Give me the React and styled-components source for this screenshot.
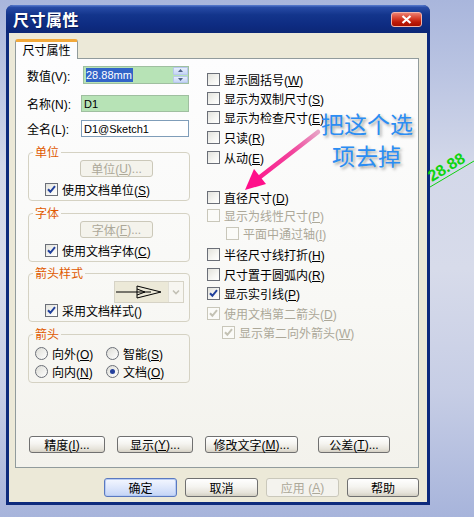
import React from 'react'
import styled, { createGlobalStyle } from 'styled-components'

const GlobalStyle = createGlobalStyle`
  html, body {
    margin: 0;
    padding: 0;
  }
  body {
    width: 474px;
    height: 517px;
    overflow: hidden;
    font-family: "Liberation Sans", "Noto Sans CJK SC", sans-serif;
    font-size: 12px;
    color: #000;
    background: linear-gradient(180deg, #a9b6dc 0%, #bac4e2 14%, #d3d8e9 32%, #d7dbea 52%, #c6cde5 76%, #a7b4db 100%);
  }
`

const Page = styled.div`
  position: relative;
  width: 474px;
  height: 517px;
  box-sizing: border-box;
  padding: 5px 0 0 6px;
`

const Window = styled.div`
  width: 424px;
  height: 500px;
  display: flex;
  flex-direction: column;
  background: #0d2a7c;
  border-radius: 7px 7px 0 0;
`

const TitleBar = styled.div`
  flex: none;
  height: 28px;
  display: flex;
  align-items: center;
  justify-content: space-between;
  padding: 0 8px 0 7px;
  border-radius: 7px 7px 0 0;
  background: linear-gradient(180deg, #5a7dcf 0%, #274aa5 9%, #13358c 35%, #0e2c82 70%, #0c2776 100%);
`

const Title = styled.div`
  color: #fff;
  font-family: "Noto Sans CJK SC", sans-serif;
  font-size: 16px;
  font-weight: 700;
  letter-spacing: 0.5px;
  text-shadow: 1px 1px 0 #0a1a55;
`

const CloseBtn = styled.div`
  width: 31px;
  height: 15px;
  box-sizing: border-box;
  border: 1px solid #f3b3a8;
  border-radius: 3px;
  display: flex;
  align-items: center;
  justify-content: center;
  background: linear-gradient(180deg, #ec7f70 0%, #d8402c 40%, #bd1a08 70%, #a80f00 100%);
`

const Body = styled.div`
  flex: 1;
  margin: 0 3px 3px;
  padding: 6px 8px 5px 6px;
  background: #ece9d8;
  display: flex;
  flex-direction: column;
`

const TabStrip = styled.div`
  display: flex;
  height: 19px;
`

const Tab = styled.div`
  position: relative;
  z-index: 1;
  width: 63px;
  height: 20px;
  box-sizing: border-box;
  border: 1px solid #919b9c;
  border-top: 3px solid #f2a93b;
  border-bottom: none;
  border-radius: 3px 3px 0 0;
  background: #fcfcfe;
  font-family: "Noto Sans CJK SC", sans-serif;
  line-height: 16px;
  text-align: center;
`

const Panel = styled.div`
  height: 410px;
  box-sizing: border-box;
  border: 1px solid #919b9c;
  background: linear-gradient(180deg, #fdfdfe 0%, #f8f8f5 60%, #f3f2ec 100%);
  display: flex;
  flex-direction: column;
`

const Columns = styled.div`
  display: flex;
  padding-left: 11px;
`

const LeftCol = styled.div`
  width: 163px;
  padding-top: 7px;
  display: flex;
  flex-direction: column;
`

const RightCol = styled.div`
  margin-left: 17px;
  padding-top: 11px;
  display: flex;
  flex-direction: column;
`

const FieldRow = styled.div`
  display: flex;
  align-items: center;
  height: ${p => p.$h}px;
  margin-top: ${p => p.$mt || 0}px;
`

const FieldLabel = styled.span`
  width: ${p => p.$w || 54}px;
  flex: none;
  white-space: nowrap;
`

const TextBox = styled.div`
  width: ${p => p.$w}px;
  height: 100%;
  box-sizing: border-box;
  border: 1px solid ${p => (p.$green ? '#9fbfa0' : '#7f9db9')};
  background: ${p => (p.$green ? '#b7e3b6' : '#fff')};
  display: flex;
  align-items: center;
  padding-left: 2px;
  font-size: 11px;
`

const Selected = styled.span`
  background: #3164c8;
  color: #fff;
  line-height: 14px;
  padding-right: 1px;
`

const SpinCol = styled.div`
  margin-left: auto;
  width: 15px;
  height: 16px;
  display: flex;
  flex-direction: column;
  gap: 1px;
`

const SpinBtn = styled.div`
  flex: 1;
  border: 1px solid #b7c8ee;
  border-radius: 1px;
  background: linear-gradient(180deg, #e6eefc, #c5d5f6);
  display: flex;
  align-items: center;
  justify-content: center;
`

const Group = styled.fieldset`
  margin: ${p => p.$mt}px 0 0 1px;
  padding: 1px 0 4px;
  width: 162px;
  box-sizing: border-box;
  min-width: 0;
  border: 1px solid #d5d2c3;
  border-radius: 4px;
  display: flex;
  flex-direction: column;
`

const Legend = styled.legend`
  margin-left: 4px;
  padding: 0 2px;
  color: #e05a00;
  line-height: 14px;
  font-family: "Noto Sans CJK SC", sans-serif;
`

const GroupButton = styled.div`
  margin-left: 51px;
  width: 73px;
  height: 17px;
  box-sizing: border-box;
  border: 1px solid #cbc8b9;
  border-radius: 3px;
  background: #f4f3ec;
  color: #aca899;
  display: flex;
  align-items: center;
  justify-content: center;
`

const CheckRow = styled.label`
  display: flex;
  align-items: center;
  gap: 4px;
  height: ${p => p.$h || 18}px;
  margin-top: ${p => p.$mt || 0}px;
  padding-left: ${p => p.$indent || 0}px;
  color: ${p => (p.$disabled ? '#aca899' : '#000')};
  white-space: nowrap;
`

const Box = styled.span`
  flex: none;
  width: 13px;
  height: 13px;
  box-sizing: border-box;
  border: 1px solid ${p => (p.$disabled ? '#c9c7ba' : '#6b6f78')};
  background: ${p => (p.$disabled ? '#fbfbf8' : 'linear-gradient(135deg, #e2e2dc 0%, #f6f6f3 60%, #fff 100%)')};
  display: flex;
  align-items: center;
  justify-content: center;
`

const ArrowRow = styled.div`
  display: flex;
  justify-content: flex-end;
  padding-right: 5px;
`

const ArrowSelect = styled.div`
  width: 70px;
  height: 22px;
  box-sizing: border-box;
  border: 1px solid #d6d3c6;
  display: flex;
`

const ArrowPreview = styled.div`
  flex: 1;
  background: #ece9d8;
  display: flex;
  align-items: center;
`

const DropBtn = styled.div`
  width: 16px;
  border-left: 1px solid #e2e0d6;
  background: #f7f6f1;
  display: flex;
  align-items: center;
  justify-content: center;
`

const RadioGrid = styled.div`
  display: grid;
  grid-template-columns: 71px auto;
  row-gap: 4px;
  padding-left: 6px;
  margin-top: 4px;
`

const RadioItem = styled.label`
  display: flex;
  align-items: center;
  gap: 4px;
  height: 14px;
  white-space: nowrap;
`

const RadioCircle = styled.span`
  flex: none;
  width: 13px;
  height: 13px;
  box-sizing: border-box;
  border: 1px solid #6b6f78;
  border-radius: 50%;
  background: linear-gradient(135deg, #dcdcd6, #fff);
  display: flex;
  align-items: center;
  justify-content: center;
  &::after {
    content: '';
    display: ${p => (p.$on ? 'block' : 'none')};
    width: 5px;
    height: 5px;
    border-radius: 50%;
    background: #24409c;
  }
`

const ButtonBar = styled.div`
  margin-top: auto;
  display: flex;
  padding: 0 0 14px 13px;
  gap: 12px;
`

const PushButton = styled.div`
  width: ${p => p.$w}px;
  height: ${p => p.$h || 17}px;
  margin-left: ${p => p.$ml || 0}px;
  box-sizing: border-box;
  border: 1px solid ${p => (p.$disabled ? '#cac8bb' : p.$default ? '#5a79c0' : '#707070')};
  border-radius: 3px;
  background: ${p =>
    p.$disabled
      ? '#f4f3ee'
      : p.$default
      ? 'linear-gradient(180deg, #f4f7ff 0%, #dbe5fb 55%, #c4d4f6 100%)'
      : 'linear-gradient(180deg, #ffffff 0%, #f5f4f0 45%, #e6e3da 80%, #d4d0c4 100%)'};
  box-shadow: ${p => (p.$default ? 'inset 0 0 0 1px #b7cbf3' : 'none')};
  color: ${p => (p.$disabled ? '#aca899' : '#000')};
  display: flex;
  align-items: center;
  justify-content: center;
  white-space: nowrap;
`

const Footer = styled.div`
  margin-top: 10px;
  display: flex;
  justify-content: flex-end;
  gap: 8px;
`

const Note = styled.div`
  position: absolute;
  left: 321px;
  top: 107px;
  font-family: "Noto Sans CJK SC", sans-serif;
  font-size: 23px;
  line-height: 32px;
  color: #2b8df3;
  text-shadow: 2px 2px 3px rgba(60, 60, 60, 0.45);
  span {
    display: block;
  }
  span + span {
    padding-left: 11px;
  }
`

const Pointer = styled.svg`
  position: absolute;
  left: 240px;
  top: 124px;
`

const Dimension = styled.svg`
  position: absolute;
  left: 424px;
  top: 140px;
  overflow: visible;
`

const Check = ({ disabled }) => (
  <svg width="9" height="9" viewBox="0 0 9 9">
    <path d="M1 4.2 L3.4 6.8 L8 1.2" fill="none" stroke={disabled ? '#c4c2b4' : '#21409c'} strokeWidth="2" />
  </svg>
)

const CheckItem = ({ children, checked, disabled, ...rest }) => (
  <CheckRow $disabled={disabled} {...rest}>
    <Box $disabled={disabled}>{checked && <Check disabled={disabled} />}</Box>
    <span>{children}</span>
  </CheckRow>
)

const Radio = ({ children, on }) => (
  <RadioItem>
    <RadioCircle $on={on} />
    <span>{children}</span>
  </RadioItem>
)

const rightOptions = [
  { t: '显示圆括号', k: 'W', mt: 0 },
  { t: '显示为双制尺寸', k: 'S', mt: 1 },
  { t: '显示为检查尺寸', k: 'E', mt: 1 },
  { t: '只读', k: 'R', mt: 2 },
  { t: '从动', k: 'E', mt: 2 },
  { t: '直径尺寸', k: 'D', mt: 22 },
  { t: '显示为线性尺寸', k: 'P', mt: 0, disabled: true },
  { t: '平面中通过轴', k: 'I', mt: 0, disabled: true, indent: 19 },
  { t: '半径尺寸线打折', k: 'H', mt: 3 },
  { t: '尺寸置于圆弧内', k: 'R', mt: 2 },
  { t: '显示实引线', k: 'P', mt: 1, checked: true },
  { t: '使用文档第二箭头', k: 'D', mt: 2, checked: true, disabled: true },
  { t: '显示第二向外箭头', k: 'W', mt: 1, checked: true, disabled: true, indent: 15 },
]

const App = () => {
  return (
    <Page>
      <GlobalStyle />
      <Window>
        <TitleBar>
          <Title>尺寸属性</Title>
          <CloseBtn>
            <svg width="11" height="9" viewBox="0 0 11 9">
              <path d="M1.5 1 L9.5 8 M9.5 1 L1.5 8" stroke="#fff" strokeWidth="2.2" />
            </svg>
          </CloseBtn>
        </TitleBar>
        <Body>
          <TabStrip>
            <Tab>尺寸属性</Tab>
          </TabStrip>
          <Panel>
            <Columns>
              <LeftCol>
                <FieldRow $h={18}>
                  <FieldLabel $w={56}>数值(V):</FieldLabel>
                  <TextBox $w={106} $green>
                    <Selected>28.88mm</Selected>
                    <SpinCol>
                      <SpinBtn>
                        <svg width="5" height="3" viewBox="0 0 5 3"><path d="M0 3 L2.5 0 L5 3Z" fill="#4d6185" /></svg>
                      </SpinBtn>
                      <SpinBtn>
                        <svg width="5" height="3" viewBox="0 0 5 3"><path d="M0 0 L2.5 3 L5 0Z" fill="#4d6185" /></svg>
                      </SpinBtn>
                    </SpinCol>
                  </TextBox>
                </FieldRow>
                <FieldRow $h={17} $mt={11}>
                  <FieldLabel>名称(N):</FieldLabel>
                  <TextBox $w={108} $green>D1</TextBox>
                </FieldRow>
                <FieldRow $h={17} $mt={8}>
                  <FieldLabel>全名(L):</FieldLabel>
                  <TextBox $w={108}>D1@Sketch1</TextBox>
                </FieldRow>

                <Group $mt={8}>
                  <Legend>单位</Legend>
                  <GroupButton>单位(<u>U</u>)...</GroupButton>
                  <CheckItem checked $mt={5} $h={14} $indent={16}>
                    使用文档单位(<u>S</u>)
                  </CheckItem>
                </Group>

                <Group $mt={5}>
                  <Legend>字体</Legend>
                  <GroupButton>字体(<u>F</u>)...</GroupButton>
                  <CheckItem checked $mt={5} $h={14} $indent={16}>
                    使用文档字体(<u>C</u>)
                  </CheckItem>
                </Group>

                <Group $mt={4}>
                  <Legend>箭头样式</Legend>
                  <ArrowRow>
                    <ArrowSelect>
                      <ArrowPreview>
                        <svg width="53" height="20" viewBox="0 0 53 20">
                          <path d="M1 10 H36" stroke="#000" strokeWidth="1" />
                          <path d="M22 4 L22 16 L46 10 Z" fill="none" stroke="#000" strokeWidth="1" />
                          <path d="M22 7 L30 10 L22 13" fill="none" stroke="#000" strokeWidth="1" />
                        </svg>
                      </ArrowPreview>
                      <DropBtn>
                        <svg width="8" height="6" viewBox="0 0 8 6">
                          <path d="M1 1.5 L4 4.5 L7 1.5" fill="none" stroke="#c2c0b4" strokeWidth="1.6" />
                        </svg>
                      </DropBtn>
                    </ArrowSelect>
                  </ArrowRow>
                  <CheckItem checked $h={14} $indent={16}>
                    采用文档样式()
                  </CheckItem>
                </Group>

                <Group $mt={5}>
                  <Legend>箭头</Legend>
                  <RadioGrid>
                    <Radio>向外(<u>O</u>)</Radio>
                    <Radio>智能(<u>S</u>)</Radio>
                    <Radio>向内(<u>N</u>)</Radio>
                    <Radio on>文档(<u>O</u>)</Radio>
                  </RadioGrid>
                </Group>
              </LeftCol>

              <RightCol>
                {rightOptions.map((o, i) => (
                  <CheckItem
                    key={i}
                    checked={o.checked}
                    disabled={o.disabled}
                    $mt={o.mt}
                    $indent={o.indent}
                  >
                    {o.t}(<u>{o.k}</u>)
                  </CheckItem>
                ))}
              </RightCol>
            </Columns>

            <ButtonBar>
              <PushButton $w={76}>精度(<u>I</u>)...</PushButton>
              <PushButton $w={76}>显示(<u>Y</u>)...</PushButton>
              <PushButton $w={93}>修改文字(<u>M</u>)...</PushButton>
              <PushButton $w={72} $ml={8}>公差(<u>T</u>)...</PushButton>
            </ButtonBar>
          </Panel>

          <Footer>
            <PushButton $w={73} $h={19} $default>确定</PushButton>
            <PushButton $w={73} $h={19}>取消</PushButton>
            <PushButton $w={73} $h={19} $disabled>应用 (<u>A</u>)</PushButton>
            <PushButton $w={72} $h={19}>帮助</PushButton>
          </Footer>
        </Body>
      </Window>

      <Note>
        <span>把这个选</span>
        <span>项去掉</span>
      </Note>

      <Pointer width="85" height="70" viewBox="0 0 85 70">
        <defs>
          <linearGradient id="pink" x1="78" y1="8" x2="6" y2="64" gradientUnits="userSpaceOnUse">
            <stop offset="0" stopColor="#e7a3c6" />
            <stop offset="0.35" stopColor="#f2449c" />
            <stop offset="1" stopColor="#ff0f8a" />
          </linearGradient>
        </defs>
        <path d="M78 8 L20 53" stroke="url(#pink)" strokeWidth="4.5" strokeLinecap="round" />
        <path d="M5 66 L14 45 L26 60 Z" fill="#ff0f8a" />
      </Pointer>

      <Dimension width="50" height="53" viewBox="0 0 50 53">
        <path d="M6 47 L50 21" stroke="#10d010" strokeWidth="1" />
        <text x="8" y="42" transform="rotate(-31 8 42)" fontFamily="Liberation Sans, sans-serif" fontSize="16" fontWeight="700" fill="#0fd40f">
          28.88
        </text>
      </Dimension>
    </Page>
  )
}

export default App
